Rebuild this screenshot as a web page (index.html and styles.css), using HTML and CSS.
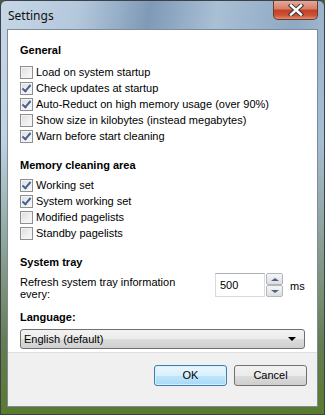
FILE: index.html
```html
<!DOCTYPE html>
<html lang="en">
<head>
    <meta charset="UTF-8">
    <link rel="stylesheet" href="styles.css">
</head>
<body>
    <div class="window">
        <div class="titlebar">
            <span class="title">Settings</span>
            <div class="close">
                <svg width="20" height="12" viewBox="0 0 20 12">
                    <path d="M5 1.5 L15 10.5 M15 1.5 L5 10.5" stroke="#3a3a3a" stroke-width="4.4" stroke-linecap="square"/>
                    <path d="M5 1.5 L15 10.5 M15 1.5 L5 10.5" stroke="#fff" stroke-width="2.4" stroke-linecap="square"/>
                </svg>
            </div>
        </div>

        <div class="client">
            <div class="content">
                <div class="group-title">General</div>
                <label class="check"><span class="box"></span>Load on system startup</label>
                <label class="check"><span class="box checked"></span>Check updates at startup</label>
                <label class="check"><span class="box checked"></span>Auto-Reduct on high memory usage (over 90%)</label>
                <label class="check"><span class="box"></span>Show size in kilobytes (instead megabytes)</label>
                <label class="check"><span class="box checked"></span>Warn before start cleaning</label>

                <div class="group-title second">Memory cleaning area</div>
                <label class="check"><span class="box checked"></span>Working set</label>
                <label class="check"><span class="box checked"></span>System working set</label>
                <label class="check"><span class="box"></span>Modified pagelists</label>
                <label class="check"><span class="box"></span>Standby pagelists</label>

                <div class="group-title third">System tray</div>
                <div class="tray-row">
                    <div class="tray-label">Refresh system tray information<br>every:</div>
                    <div class="spin">
                        <div class="spin-field">500</div>
                        <div class="spin-buttons">
                            <div class="spin-btn"><span class="arrow up"></span></div>
                            <div class="spin-btn"><span class="arrow down"></span></div>
                        </div>
                    </div>
                    <span class="unit">ms</span>
                </div>

                <div class="group-title lang">Language:</div>
                <div class="combo">
                    <span>English (default)</span>
                    <span class="combo-arrow"></span>
                </div>
            </div>

            <div class="footer">
                <div class="button default">OK</div>
                <div class="button">Cancel</div>
            </div>
        </div>
    </div>
</body>
</html>
```

FILE: styles.css
```css
body {
    margin: 0;
    padding: 0;
    background-color: #4d5a3a;
    font-family: 'Liberation Sans', Arial, sans-serif;
    font-size: 11px;
    color: #000;
}

.window {
    width: 323px;
    height: 413px;
    border: 1px solid #39424a;
    border-radius: 6px 6px 0 0;
    background: linear-gradient(100deg, #c6d6e6 0%, #b4c8dc 20%, #7f9ab6 38%, #a9bfd4 55%, #8ea9c4 75%, #c2d2e2 100%);
    display: flex;
    flex-direction: column;
    overflow: hidden;
    position: relative;
}

.window::before {
    content: "";
    position: absolute;
    left: 0;
    right: 0;
    top: 140px;
    bottom: 0;
    background: linear-gradient(to bottom, rgba(98, 120, 80, 0) 0%, rgba(78, 104, 46, 0.8) 75%, #5a7a2c 100%);
}

.titlebar {
    height: 28px;
    display: flex;
    justify-content: space-between;
    align-items: flex-start;
    padding: 0 6px 0 7px;
    position: relative;
    z-index: 1;
}

.title {
    font-family: 'Noto Sans', sans-serif;
    font-size: 12px;
    margin-top: 6px;
    color: #111;
}

.close {
    width: 43px;
    height: 18px;
    border: 1px solid #6a3a2c;
    border-top: none;
    border-radius: 0 0 5px 5px;
    background: linear-gradient(to bottom, #e6a896 0%, #d67e66 45%, #c13f26 50%, #cc5436 80%, #de9070 100%);
    display: flex;
    align-items: center;
    justify-content: center;
}

.client {
    margin: 0 6px 7px 6px;
    border: 1px solid #7d8a99;
    background-color: #fff;
    display: flex;
    flex-direction: column;
    flex: 1;
    position: relative;
    z-index: 1;
}

.content {
    padding: 11px 12px 0 12px;
    flex: 1;
}

.group-title {
    font-weight: bold;
    height: 18px;
    line-height: 18px;
    margin-bottom: 5px;
}

.group-title.second {
    margin-top: 12px;
    margin-bottom: 3px;
}

.group-title.third {
    margin-top: 12px;
    margin-bottom: 3px;
}

.group-title.lang {
    margin-top: 8px;
    margin-bottom: 3px;
}

.check {
    display: flex;
    align-items: center;
    height: 16px;
    line-height: 16px;
    white-space: nowrap;
}

.box {
    width: 11px;
    height: 11px;
    border: 1px solid #8e8f8f;
    background: linear-gradient(135deg, #dcdcdc 0%, #f0f0f0 60%, #fbfbfb 100%);
    box-shadow: inset 0 0 0 1px #f4f4f4;
    margin-right: 3px;
    position: relative;
    flex-shrink: 0;
}

.box.checked::after {
    content: "";
    position: absolute;
    left: 3px;
    top: 0;
    width: 3px;
    height: 7px;
    border-right: 2px solid #4a5f97;
    border-bottom: 2px solid #4a5f97;
    transform: rotate(40deg);
}

.tray-row {
    display: flex;
    align-items: flex-start;
    height: 26px;
}

.tray-label {
    width: 195px;
    line-height: 12px;
    margin-top: 2px;
}

.spin {
    display: flex;
    height: 24px;
    margin-top: -1px;
}

.spin-field {
    width: 44px;
    height: 22px;
    border: 1px solid #d5dbe3;
    border-top-color: #abadb3;
    line-height: 22px;
    padding-left: 4px;
}

.spin-buttons {
    display: flex;
    flex-direction: column;
    width: 17px;
    margin-left: 1px;
}

.spin-btn {
    height: 10px;
    border: 1px solid #b0b7c2;
    border-radius: 2px;
    background: linear-gradient(to bottom, #f6f6f6, #dedede);
    display: flex;
    align-items: center;
    justify-content: center;
}

.arrow {
    width: 0;
    height: 0;
    border-left: 4px solid transparent;
    border-right: 4px solid transparent;
}

.arrow.up {
    border-bottom: 3px solid #4d6185;
}

.arrow.down {
    border-top: 3px solid #4d6185;
}

.unit {
    margin-left: 7px;
    margin-top: 4px;
    line-height: 16px;
}

.combo {
    height: 18px;
    border: 1px solid #707070;
    border-radius: 3px;
    background: linear-gradient(to bottom, #f2f2f2 0%, #ebebeb 50%, #dddddd 51%, #cfcfcf 100%);
    display: flex;
    align-items: center;
    justify-content: space-between;
    padding: 0 8px 0 3px;
}

.combo-arrow {
    width: 0;
    height: 0;
    border-left: 4px solid transparent;
    border-right: 4px solid transparent;
    border-top: 4px solid #000;
}

.footer {
    height: 41px;
    border-top: 1px solid #dfdfdf;
    background-color: #f0f0f0;
    display: flex;
    justify-content: flex-end;
    align-items: flex-start;
    gap: 7px;
    padding: 12px 10px 0 0;
}

.button {
    width: 71px;
    height: 19px;
    border: 1px solid #707070;
    border-radius: 3px;
    background: linear-gradient(to bottom, #f2f2f2 0%, #ebebeb 50%, #dddddd 51%, #cfcfcf 100%);
    text-align: center;
    line-height: 19px;
}

.button.default {
    border-color: #3c7fb1;
    background: linear-gradient(to bottom, #eaf6fd 0%, #d9f0fc 50%, #bee6fd 51%, #a7d9f5 100%);
    box-shadow: inset 0 0 0 1px #d8eefa;
}
```
